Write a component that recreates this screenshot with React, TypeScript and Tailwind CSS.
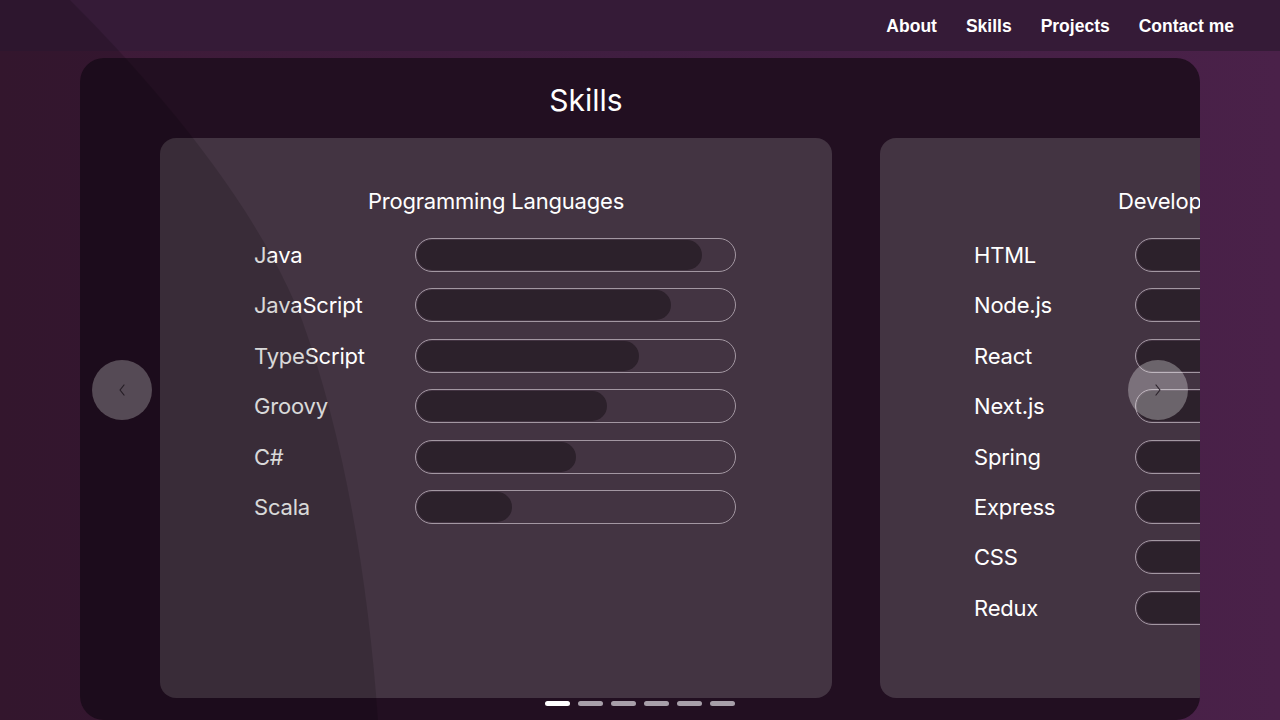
import React from 'react';

const languages = [
  { name: 'Java', level: 90 },
  { name: 'JavaScript', level: 80 },
  { name: 'TypeScript', level: 70 },
  { name: 'Groovy', level: 60 },
  { name: 'C#', level: 50 },
  { name: 'Scala', level: 30 },
];

const tools = [
  { name: 'HTML', level: 90 },
  { name: 'Node.js', level: 85 },
  { name: 'React', level: 85 },
  { name: 'Next.js', level: 75 },
  { name: 'Spring', level: 70 },
  { name: 'Express', level: 70 },
  { name: 'CSS', level: 80 },
  { name: 'Redux', level: 60 },
];

const navLinks = ['About', 'Skills', 'Projects', 'Contact me'];

function SkillBar({ level }: { level: number }) {
  return (
    <div className="h-[34px] w-[321px] shrink-0 rounded-full border border-[#a397a2] p-px">
      <div className="h-full rounded-full bg-[#2c212b]" style={{ width: `${level}%` }} />
    </div>
  );
}

function SkillCard({ title, items }: { title: string; items: { name: string; level: number }[] }) {
  return (
    <div className="h-[560px] w-[672px] shrink-0 rounded-2xl bg-[#433442] pt-[48px]">
      <h3 className="text-center text-[22px] leading-[30px] tracking-[-0.2px] text-white">{title}</h3>
      <div className="mt-[22px] flex flex-col gap-[16.4px] pl-[94px]">
        {items.map((item) => (
          <div key={item.name} className="flex items-center">
            <span className="w-[161px] text-[22px] leading-[34px] tracking-[-0.2px] text-white">{item.name}</span>
            <SkillBar level={item.level} />
          </div>
        ))}
      </div>
    </div>
  );
}

function Chevron({ dir }: { dir: 'left' | 'right' }) {
  return (
    <svg width="10" height="14" viewBox="0 0 10 14" fill="none">
      <polyline
        points={dir === 'left' ? '7,2 3,7 7,12' : '3,2 7,7 3,12'}
        stroke="#2b222b"
        strokeWidth="1.2"
        strokeLinecap="round"
        strokeLinejoin="round"
      />
    </svg>
  );
}

export default function App() {
  return (
    <div
      className="relative h-[720px] w-[1280px] overflow-hidden bg-gradient-to-r from-[#3d1a36] via-[#401e41] to-[#4a2149]"
      style={{ fontFamily: 'Inter, "Noto Sans", sans-serif' }}
    >
      {/* Nav */}
      <nav className="flex h-[51px] items-center justify-end gap-[29px] bg-[#351b37] pr-[46px] pt-[2px]">
        {navLinks.map((link) => (
          <a
            key={link}
            className="text-[17.5px] font-bold text-white"
            style={{ fontFamily: '"Liberation Sans", Arial, sans-serif' }}
          >
            {link}
          </a>
        ))}
      </nav>

      {/* Skills panel */}
      <div className="px-[80px] pt-[7px]">
        <section className="relative h-[662px] overflow-hidden rounded-[24px] bg-[#220f21]">
          <h2 className="w-[1012px] pt-[23px] text-center text-[30px] leading-[38px] text-white">Skills</h2>
          <div className="mt-[19px] flex gap-[48px] pl-[80px]">
            <SkillCard title="Programming Languages" items={languages} />
            <SkillCard title="Development Tools" items={tools} />
          </div>

          {/* Arrows */}
          <button className="absolute left-[12px] top-[302px] flex h-[60px] w-[60px] items-center justify-center rounded-full bg-white/30">
            <Chevron dir="left" />
          </button>
          <button className="absolute left-[1048px] top-[302px] flex h-[60px] w-[60px] items-center justify-center rounded-full bg-white/30">
            <Chevron dir="right" />
          </button>

          {/* Dots */}
          <div className="absolute bottom-[14px] left-0 right-0 flex justify-center gap-[8px]">
            {[0, 1, 2, 3, 4, 5].map((i) => (
              <span
                key={i}
                className={i === 0 ? 'h-[5px] w-[25px] rounded-full bg-white' : 'h-[5px] w-[25px] rounded-full bg-[#a79fa9]'}
              />
            ))}
          </div>
        </section>
      </div>

      {/* Decorative dark swoosh */}
      <svg className="pointer-events-none absolute inset-0" width="1280" height="720" viewBox="0 0 1280 720">
        <path
          d="M0 0 L70 0 C150 80 255 200 302 320 C345 440 368 580 378 720 L0 720 Z"
          fill="black"
          fillOpacity="0.15"
        />
      </svg>
    </div>
  );
}
